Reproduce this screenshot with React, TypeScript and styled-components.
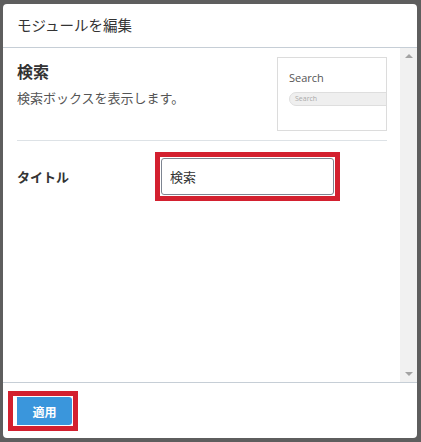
import React from 'react';
import styled, { createGlobalStyle } from 'styled-components';

const GlobalStyle = createGlobalStyle`
	html, body {
		margin: 0;
		padding: 0;
		background: #5e5e5e;
	}
	body {
		font-family: "Noto Sans CJK JP", "Noto Sans", sans-serif;
		color: #333;
	}
`;

export default function App() {
	return (
		<>
			<GlobalStyle />
			<Modal>
				<Header>モジュールを編集</Header>
				<Body>
					<Content>
						<ModuleInfo>
							<div>
								<ModuleName>検索</ModuleName>
								<ModuleDesc>検索ボックスを表示します。</ModuleDesc>
							</div>
							<Preview>
								<PreviewTitle>Search</PreviewTitle>
								<PreviewInput>Search</PreviewInput>
							</Preview>
						</ModuleInfo>
						<Divider />
						<FieldRow>
							<FieldLabel>タイトル</FieldLabel>
							<Highlight>
								<TextInput defaultValue="検索" />
							</Highlight>
						</FieldRow>
					</Content>
					<Scrollbar>
						<Arrow />
						<Arrow down />
					</Scrollbar>
				</Body>
				<Footer>
					<Highlight>
						<ApplyButton>適用</ApplyButton>
					</Highlight>
				</Footer>
			</Modal>
		</>
	);
}

const Modal = styled.div`
	margin: 4px 0 0 3px;
	width: 414px;
	height: 434px;
	background: #ffffff;
	border-radius: 4px;
	display: flex;
	flex-direction: column;
	overflow: hidden;
`;

const Header = styled.div`
	height: 44px;
	box-sizing: border-box;
	padding: 0 0 2px 14px;
	display: flex;
	align-items: center;
	font-size: 14.5px;
	color: #333;
	border-bottom: 1px solid #c6ced6;
`;

const Body = styled.div`
	flex: 1;
	display: flex;
	min-height: 0;
`;

const Content = styled.div`
	flex: 1;
	padding: 9px 13px 0 14px;
	overflow: hidden;
`;

const ModuleInfo = styled.div`
	display: flex;
	justify-content: space-between;
`;

const ModuleName = styled.div`
	margin-top: 3px;
	font-size: 16px;
	font-weight: bold;
	color: #333;
	line-height: 22px;
`;

const ModuleDesc = styled.div`
	margin-top: 7px;
	font-size: 13px;
	color: #555;
	line-height: 18px;
`;

const Preview = styled.div`
	width: 110px;
	height: 74px;
	box-sizing: border-box;
	border: 1px solid #dcdcdc;
	padding: 12px 0 0 11px;
	overflow: hidden;
`;

const PreviewTitle = styled.div`
	font-family: "Open Sans", "Liberation Sans", sans-serif;
	font-size: 11px;
	color: #555;
	line-height: 16px;
`;

const PreviewInput = styled.div`
	margin-top: 6px;
	width: 120px;
	height: 14px;
	box-sizing: border-box;
	border: 1px solid #dedede;
	border-radius: 7px;
	background: #efefef;
	padding-left: 5px;
	font-family: "Open Sans", "Liberation Sans", sans-serif;
	font-size: 7px;
	line-height: 12px;
	color: #aaa;
`;

const Divider = styled.div`
	margin-top: 9px;
	height: 1px;
	background: #dde2e6;
`;

const FieldRow = styled.div`
	display: flex;
	align-items: center;
	margin-top: 11px;
`;

const FieldLabel = styled.div`
	width: 138px;
	font-size: 13px;
	font-weight: bold;
	color: #333;
`;

const Highlight = styled.div`
	display: inline-flex;
	border: 5px solid #d3202f;
	padding: 1px;
	background: #fff;
`;

const TextInput = styled.input`
	width: 173px;
	height: 37px;
	box-sizing: border-box;
	border: 1px solid #7d8591;
	border-radius: 3px;
	padding: 0 8px;
	font-family: "Noto Sans CJK JP", sans-serif;
	font-size: 13px;
	color: #333;
	outline: none;
`;

const Scrollbar = styled.div`
	width: 17px;
	background: #f1f1f1;
	display: flex;
	flex-direction: column;
	justify-content: space-between;
	align-items: center;
	padding: 6px 0;
`;

const Arrow = styled.div<{ down?: boolean }>`
	width: 0;
	height: 0;
	border-left: 4px solid transparent;
	border-right: 4px solid transparent;
	${(props) => props.down
		? 'border-top: 4px solid #a3a3a3;'
		: 'border-bottom: 4px solid #a3a3a3;'}
`;

const Footer = styled.div`
	height: 56px;
	box-sizing: border-box;
	border-top: 1px solid #c6ced6;
	padding: 8px 0 0 5px;
`;

const ApplyButton = styled.button`
	width: 58px;
	height: 28px;
	border: none;
	border-left: 3px solid #fff;
	border-radius: 3px;
	background: #3a96dc;
	color: #fff;
	font-family: "Noto Sans CJK JP", sans-serif;
	font-size: 12px;
	font-weight: bold;
	padding: 0;
`;
